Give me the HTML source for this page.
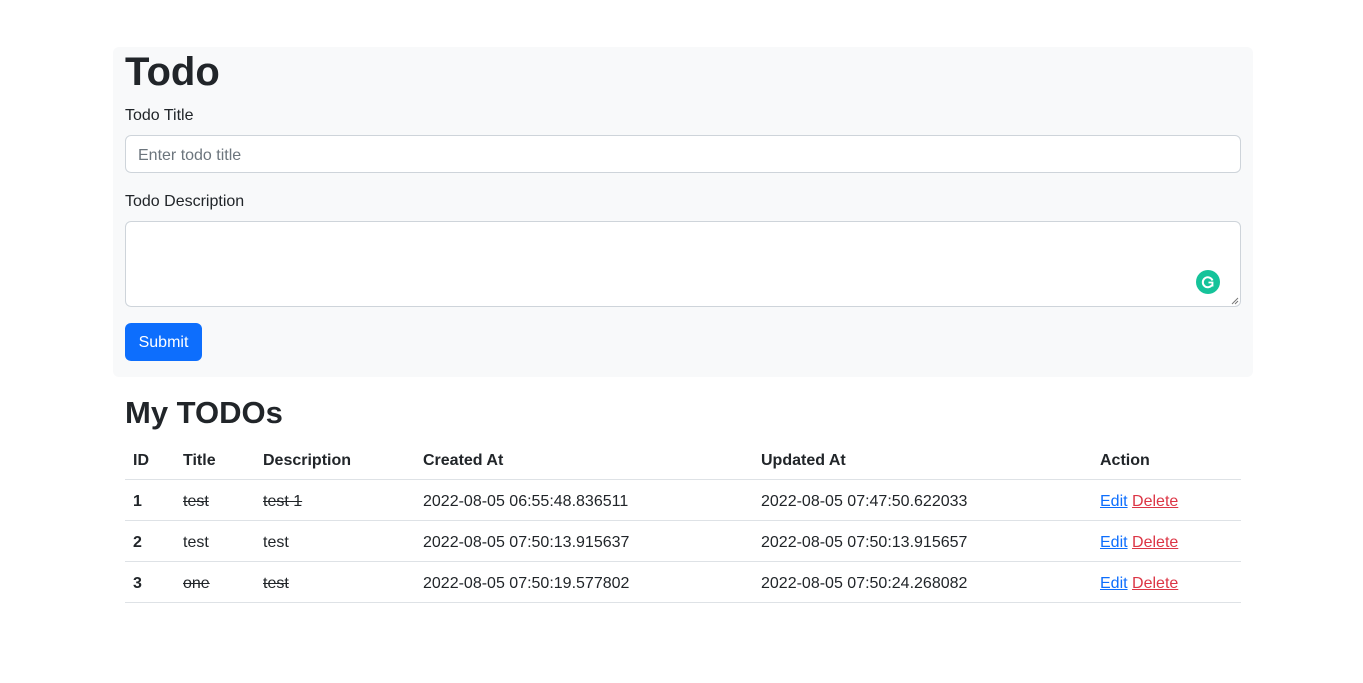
<!DOCTYPE html>
<html><head><meta charset="utf-8"><style>
*{box-sizing:border-box}
body{margin:0;background:#fff;font-family:"Liberation Sans","DejaVu Sans",sans-serif;color:#212529;font-size:16px;width:1363px;height:683px;overflow:hidden}
.box{position:absolute;left:113px;top:47px;width:1140px;height:330px;background:#f8f9fa;border-radius:6px}
.abs{position:absolute}
h1{position:absolute;left:125px;top:47px;margin:0;font-size:40px;font-weight:bold;line-height:50px}
.lbl{position:absolute;left:125px;font-size:16px}
.inp{position:absolute;left:125px;width:1116px;background:#fff;border:1px solid #ced4da;border-radius:6px}
.btn{position:absolute;left:125px;top:323px;width:77px;height:38px;background:#0d6efd;color:#fff;border-radius:6px;font-size:16px;line-height:40px;text-align:center}
h2{position:absolute;left:125px;top:393px;margin:0;font-size:31px;font-weight:bold;line-height:40px}
.row{position:absolute;left:125px;width:1116px;height:41px;border-bottom:1px solid #dee2e6}
.row span{position:absolute;top:12px;line-height:20px;font-size:16px}
s{text-decoration:line-through}
a{text-decoration:underline}
</style></head><body>
<div class="box"></div>
<h1>Todo</h1>
<div class="lbl" style="top:107px">Todo Title</div>
<div class="inp" style="top:135px;height:38px"><span class="abs" style="left:12px;top:11px;color:#6c757d">Enter todo title</span></div>
<div class="lbl" style="top:193px">Todo Description</div>
<div class="inp" style="top:221px;height:86px">
<div class="abs" style="left:1070px;top:48px;width:24px;height:24px;border-radius:50%;background:#15c39a">
<svg width="24" height="24" viewBox="0 0 24 24" style="position:absolute;left:0;top:0"><path d="M16.5 10.5A5 5 0 1 0 16 15" fill="none" stroke="#fff" stroke-width="2"/><path d="M12.5 12.5h4v4" fill="none" stroke="#fff" stroke-width="1.8"/></svg></div>
<svg class="abs" style="right:1px;bottom:1px" width="8" height="8"><path d="M1 7L7 1M4 7L7 4" stroke="#777" stroke-width="1"/></svg>
</div>
<div class="btn">Submit</div>
<h2>My TODOs</h2>
<div class="row" style="top:439px;font-weight:bold"><span style="left:8px">ID</span><span style="left:58px">Title</span><span style="left:138px">Description</span><span style="left:298px">Created At</span><span style="left:636px">Updated At</span><span style="left:975px">Action</span></div>
<div class="row" style="top:480px"><span style="left:8px;font-weight:bold">1</span><span style="left:58px"><s>test</s></span><span style="left:138px"><s>test 1</s></span><span style="left:298px">2022-08-05 06:55:48.836511</span><span style="left:636px">2022-08-05 07:47:50.622033</span><span style="left:975px"><a style="color:#0d6efd">Edit</a> <a style="color:#dc3545">Delete</a></span></div>
<div class="row" style="top:521px"><span style="left:8px;font-weight:bold">2</span><span style="left:58px">test</span><span style="left:138px">test</span><span style="left:298px">2022-08-05 07:50:13.915637</span><span style="left:636px">2022-08-05 07:50:13.915657</span><span style="left:975px"><a style="color:#0d6efd">Edit</a> <a style="color:#dc3545">Delete</a></span></div>
<div class="row" style="top:562px"><span style="left:8px;font-weight:bold">3</span><span style="left:58px"><s>one</s></span><span style="left:138px"><s>test</s></span><span style="left:298px">2022-08-05 07:50:19.577802</span><span style="left:636px">2022-08-05 07:50:24.268082</span><span style="left:975px"><a style="color:#0d6efd">Edit</a> <a style="color:#dc3545">Delete</a></span></div>
</body></html>
